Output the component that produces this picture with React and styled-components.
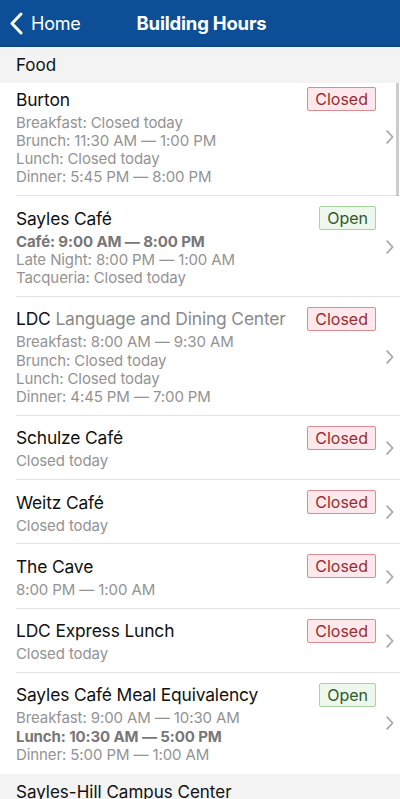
import React, { useLayoutEffect, useRef } from 'react';
import styled, { createGlobalStyle } from 'styled-components';

const GlobalStyle = createGlobalStyle`
  html, body { margin: 0; padding: 0; background: #fff; }
  body { font-family: Inter, "Noto Sans", sans-serif; -webkit-font-smoothing: antialiased; }
`;

const Screen = styled.div`
  width: 400px;
  height: 799px;
  display: flex;
  flex-direction: column;
  overflow: hidden;
`;

const NavBar = styled.header`
  height: 47px;
  flex: 0 0 47px;
  background: #0d4f97;
  border-bottom: 1px solid #0a4384;
  box-sizing: border-box;
  display: grid;
  grid-template-columns: 1fr auto 1fr;
  align-items: center;
  color: #fff;
`;

const Back = styled.div`
  display: flex;
  align-items: center;
  gap: 8px;
  padding-left: 10px;
  font-size: 18px;
  letter-spacing: -0.2px;
`;

const Title = styled.h1`
  margin: 0 0 0 3px;
  font-size: 18.5px;
  font-weight: 700;
  letter-spacing: -0.2px;
`;

const ScrollWrap = styled.div`
  position: relative;
  flex: 1;
  min-height: 0;
`;

const Scroller = styled.div`
  height: 100%;
  overflow-y: auto;
  scrollbar-width: none;
  &::-webkit-scrollbar { display: none; }
`;

const Indicator = styled.div`
  position: absolute;
  right: 1px;
  top: 3px;
  width: 3px;
  height: 146px;
  border-radius: 2px;
  background: rgba(0, 0, 0, 0.2);
`;

const SectionHeader = styled.div`
  position: sticky;
  top: 0;
  z-index: 1;
  height: 36px;
  box-sizing: border-box;
  padding: 0 16px;
  display: flex;
  align-items: center;
  background: #f3f3f3;
  font-size: 17px;
  color: #111;
`;

const Row = styled.div`
  display: flex;
  align-items: center;
  padding-left: 16px;
`;

const RowBody = styled.div`
  flex: 1;
  display: flex;
  align-items: center;
  padding: 10px 6px 8.5px 0;
  border-bottom: 1px solid ${p => (p.$last ? 'transparent' : '#e3e3e3')};
`;

const RowText = styled.div`
  flex: 1;
  min-width: 0;
`;

const TopLine = styled.div`
  display: flex;
  align-items: center;
  justify-content: space-between;
  height: 24px;
  padding-right: 10px;
`;

const Name = styled.div`
  font-size: 17.4px;
  color: #111;
  letter-spacing: -0.15px;
  white-space: nowrap;
`;

const Sub = styled.span`
  color: #8a8a8a;
`;

const Details = styled.div`
  margin-top: 2.5px;
`;

const Line = styled.div`
  font-size: 15px;
  line-height: 18.25px;
  color: ${p => (p.$bold ? '#777' : '#939393')};
  font-weight: ${p => (p.$bold ? 700 : 400)};
  letter-spacing: -0.1px;
  white-space: nowrap;
`;

const Badge = styled.span`
  font-size: 16px;
  line-height: 22px;
  padding: 0 7px;
  border-radius: 2px;
  border: 1px solid ${p => (p.$open ? '#a9d3a3' : '#d88c93')};
  background: ${p => (p.$open ? '#eef7ec' : '#fde9eb')};
  color: ${p => (p.$open ? '#2f5a2c' : '#9a2b31')};
`;

const Chevron = () => (
  <svg width="8" height="14" viewBox="0 0 8 14" style={{ flex: '0 0 8px' }}>
    <path d="M1.2 1.2 L6.6 7 L1.2 12.8" fill="none" stroke="#a9a9ad" strokeWidth="1.8" strokeLinecap="round" strokeLinejoin="round" />
  </svg>
);

const BackIcon = () => (
  <svg width="13" height="23" viewBox="0 0 13 23">
    <path d="M11 2 L2 11.5 L11 21" fill="none" stroke="#fff" strokeWidth="3" strokeLinecap="round" strokeLinejoin="round" />
  </svg>
);

const food = [
  {
    name: 'Burton',
    open: false,
    lines: [
      ['Breakfast: Closed today'],
      ['Brunch: 11:30 AM — 1:00 PM'],
      ['Lunch: Closed today'],
      ['Dinner: 5:45 PM — 8:00 PM'],
    ],
  },
  {
    name: 'Sayles Café',
    open: true,
    lines: [
      ['Café: 9:00 AM — 8:00 PM', true],
      ['Late Night: 8:00 PM — 1:00 AM'],
      ['Tacqueria: Closed today'],
    ],
  },
  {
    name: 'LDC',
    sub: 'Language and Dining Center',
    open: false,
    lines: [
      ['Breakfast: 8:00 AM — 9:30 AM'],
      ['Brunch: Closed today'],
      ['Lunch: Closed today'],
      ['Dinner: 4:45 PM — 7:00 PM'],
    ],
  },
  { name: 'Schulze Café', open: false, lines: [['Closed today']] },
  { name: 'Weitz Café', open: false, lines: [['Closed today']] },
  { name: 'The Cave', open: false, lines: [['8:00 PM — 1:00 AM']] },
  { name: 'LDC Express Lunch', open: false, lines: [['Closed today']] },
  {
    name: 'Sayles Café Meal Equivalency',
    open: true,
    lines: [
      ['Breakfast: 9:00 AM — 10:30 AM'],
      ['Lunch: 10:30 AM — 5:00 PM', true],
      ['Dinner: 5:00 PM — 1:00 AM'],
    ],
  },
];

const campus = [
  { name: 'Sayles-Hill Campus Center', open: true, lines: [['7:00 AM — 1:00 AM']] },
];

const Place = ({ item, last }) => (
  <Row>
    <RowBody $last={last}>
      <RowText>
        <TopLine>
          <Name>
            {item.name}
            {item.sub && <Sub> {item.sub}</Sub>}
          </Name>
          <Badge $open={item.open}>{item.open ? 'Open' : 'Closed'}</Badge>
        </TopLine>
        <Details>
          {item.lines.map(([text, bold]) => (
            <Line key={text} $bold={bold}>{text}</Line>
          ))}
        </Details>
      </RowText>
      <Chevron />
    </RowBody>
  </Row>
);

export default function App() {
  const ref = useRef(null);
  useLayoutEffect(() => {
    if (ref.current) ref.current.scrollTop = 6;
  }, []);

  return (
    <>
      <GlobalStyle />
      <Screen>
        <NavBar>
          <Back>
            <BackIcon />
            <span>Home</span>
          </Back>
          <Title>Building Hours</Title>
          <div />
        </NavBar>
        <ScrollWrap>
          <Scroller ref={ref}>
            <section>
              <SectionHeader>Food</SectionHeader>
              {food.map((item, i) => (
                <Place key={item.name} item={item} last={i === food.length - 1} />
              ))}
            </section>
            <section>
              <SectionHeader>Sayles-Hill Campus Center</SectionHeader>
              {campus.map(item => (
                <Place key={item.name} item={item} last />
              ))}
            </section>
          </Scroller>
          <Indicator />
        </ScrollWrap>
      </Screen>
    </>
  );
}
